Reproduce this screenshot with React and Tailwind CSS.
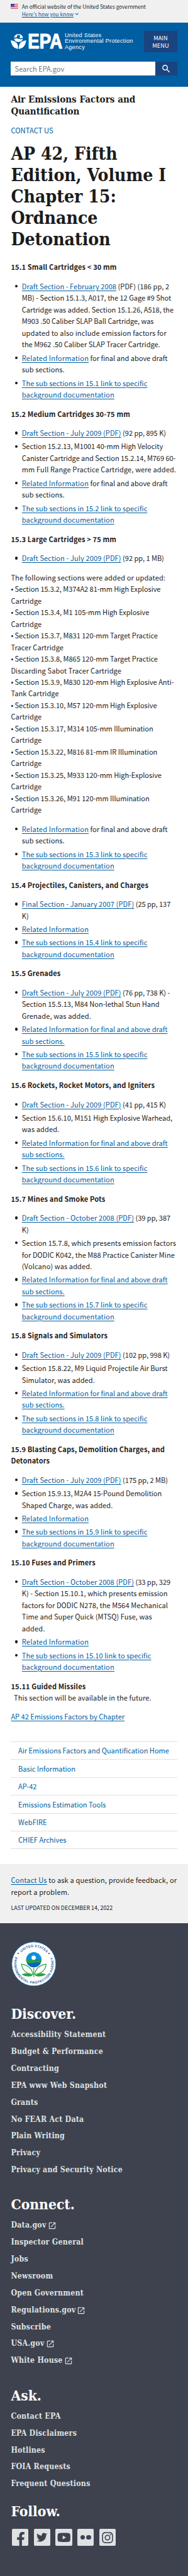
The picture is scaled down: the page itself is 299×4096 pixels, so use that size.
import { MdExpandMore, MdOpenInNew, MdSearch } from 'react-icons/md';
import { FaFacebookF, FaTwitter, FaYoutube, FaInstagram } from 'react-icons/fa';

const D = 'tracking-[0.112px]';
const P = 'tracking-[-0.02px]';

// A run is [text, tracking class, isLink]; a line is a list of runs; an item is a list of lines.
const related = [
  [['Related Information', 'tracking-[0.19px]', true], [' for final and above draft', 'tracking-[0px]']],
  [['sub sections.', 'tracking-[0.1px]']],
];
const relatedLink = [
  [['Related Information', 'tracking-[0.19px]', true], [' for final and above draft', 'tracking-[0px]', true]],
  [['sub sections.', 'tracking-[0.1px]', true]],
];
const relatedOnly = [[['Related Information', 'tracking-[0.19px]', true]]];
const subs = (n) => [
  [[`The sub sections in ${n} link to specific`, 'tracking-[0.049px]', true]],
  [['background documentation', 'tracking-[0.146px]', true]],
];
const july = (rest) => [['Draft Section - July 2009 (PDF)', D, true], [rest, P]];

const s1 = [
  [
    [['Draft Section - February 2008', 'tracking-[0.052px]', true], [' (PDF) (186 pp, 2', 'tracking-[0.08px]']],
    [['MB) - Section 15.1.3, A017, the 12 Gage #9 Shot', 'tracking-[-0.007px]']],
    [['Cartridge was added. Section 15.1.26, A518, the', P]],
    [['M903 .50 Caliber SLAP Ball Cartridge, was', 'tracking-[-0.031px]']],
    [['updated to also include emission factors for', 'tracking-[0.146px]']],
    [['the M962 .50 Caliber SLAP Tracer Cartridge.', 'tracking-[-0.005px]']],
  ],
  related,
  subs('15.1'),
];
const s2 = [
  [july(' (92 pp, 895 K)')],
  [
    [['Section 15.2.13, M1001 40-mm High Velocity', P]],
    [['Canister Cartridge and Section 15.2.14, M769 60-', 'tracking-[-0.042px]']],
    [['mm Full Range Practice Cartridge, were added.', 'tracking-[0.132px]']],
  ],
  related,
  subs('15.2'),
];
const s3a = [[july(' (92 pp, 1 MB)')]];
const s3b = [related, subs('15.3')];
const updated = [
  ['The following sections were added or updated:', 'tracking-[0.131px]'],
  ['• Section 15.3.2, M374A2 81-mm High Explosive', 'tracking-[-0.036px]'],
  ['Cartridge', D],
  ['• Section 15.3.4, M1 105-mm High Explosive', P],
  ['Cartridge', D],
  ['• Section 15.3.7, M831 120-mm Target Practice', P],
  ['Tracer Cartridge', 'tracking-[0.08px]'],
  ['• Section 15.3.8, M865 120-mm Target Practice', P],
  ['Discarding Sabot Tracer Cartridge', D],
  ['• Section 15.3.9, M830 120-mm High Explosive Anti-', 'tracking-[-0.015px]'],
  ['Tank Cartridge', 'tracking-[0.08px]'],
  ['• Section 15.3.10, M57 120-mm High Explosive', P],
  ['Cartridge', D],
  ['• Section 15.3.17, M314 105-mm Illumination', P],
  ['Cartridge', D],
  ['• Section 15.3.22, M816 81-mm IR Illumination', P],
  ['Cartridge', D],
  ['• Section 15.3.25, M933 120-mm High-Explosive', P],
  ['Cartridge', D],
  ['• Section 15.3.26, M91 120-mm Illumination', P],
  ['Cartridge', D],
];
const s4 = [
  [[['Final Section - January 2007 (PDF)', D, true], [' (25 pp, 137', P]], [['K)', P]]],
  relatedOnly,
  subs('15.4'),
];
const s5 = [
  [
    july(' (76 pp, 738 K) -'),
    [['Section 15.5.13, M84 Non-lethal Stun Hand', 'tracking-[0.02px]']],
    [['Grenade, was added.', 'tracking-[0.13px]']],
  ],
  relatedLink,
  subs('15.5'),
];
const s6 = [
  [july(' (41 pp, 415 K)')],
  [[['Section 15.6.10, M151 High Explosive Warhead,', 'tracking-[0.01px]']], [['was added.', D]]],
  relatedLink,
  subs('15.6'),
];
const s7 = [
  [[['Draft Section - October 2008 (PDF)', D, true], [' (39 pp, 387', P]], [['K)', P]]],
  [
    [['Section 15.7.8, which presents emission factors', 'tracking-[0.09px]']],
    [['for DODIC K042, the M88 Practice Canister Mine', 'tracking-[0.062px]']],
    [['(Volcano) was added.', D]],
  ],
  relatedLink,
  subs('15.7'),
];
const s8 = [
  [july(' (102 pp, 998 K)')],
  [[['Section 15.8.22, M9 Liquid Projectile Air Burst', 'tracking-[0.02px]']], [['Simulator, was added.', D]]],
  relatedLink,
  subs('15.8'),
];
const s9 = [
  [july(' (175 pp, 2 MB)')],
  [[['Section 15.9.13, M2A4 15-Pound Demolition', P]], [['Shaped Charge, was added.', D]]],
  relatedOnly,
  subs('15.9'),
];
const s10 = [
  [
    [['Draft Section - October 2008 (PDF)', D, true], [' (33 pp, 329', P]],
    [['K) - Section 15.10.1, which presents emission', 'tracking-[0.06px]']],
    [['factors for DODIC N278, the M564 Mechanical', 'tracking-[0.06px]']],
    [['Time and Super Quick (MTSQ) Fuse, was', 'tracking-[0.06px]']],
    [['added.', D]],
  ],
  relatedOnly,
  subs('15.10'),
];

const LINK = 'text-[#005ea2] underline decoration-1 underline-offset-[1.5px]';

function List({ items }) {
  return (
    <ul className="mb-[12.1px] flex flex-col gap-[2.9px]">
      {items.map((item, i) => (
        <li key={i} className="flex">
          <span className="flex h-[18.47px] w-[17.4px] shrink-0 items-center pl-[6.2px]">
            <span className="size-[4.4px] rounded-full bg-[#1b1b1b]" />
          </span>
          <div>
            {item.map((line, j) => (
              <div key={j} className="whitespace-pre">
                {line.map(([text, track, link], k) =>
                  link ? (
                    <a key={k} className={`${LINK} ${track}`}>{text}</a>
                  ) : (
                    <span key={k} className={track}>{text}</span>
                  ),
                )}
              </div>
            ))}
          </div>
        </li>
      ))}
    </ul>
  );
}

function Head({ children }) {
  return <h3 className="mb-[12.1px] font-bold tracking-[0.15px] whitespace-nowrap">{children}</h3>;
}

function Flag() {
  return (
    <svg viewBox="0 0 16 11" className="mt-[0.8px] h-[8px] w-[11.6px]">
      <rect width="16" height="11" fill="#fff" />
      {[0, 2, 4, 6, 8, 10].map((y) => (
        <rect key={y} y={y} width="16" height="1" fill="#d8314a" />
      ))}
      <rect width="8" height="6.5" fill="#1e33b1" />
      {[1, 3, 5].map((y) => [1, 3, 5, 7].map((x) => <circle key={`${x}-${y}`} cx={x} cy={y} r=".45" fill="#fff" />))}
    </svg>
  );
}

function Logo() {
  return (
    <svg viewBox="0 0 345 110" className="h-[26.6px] w-[83.5px] overflow-visible">
      <path d="M21 33A31 31 0 0 1 81 33Q66 39 51 33T21 33Z" fill="#fff" />
      <circle cx="51" cy="25" r="10.5" fill="#005ea2" />
      <path d="M22 40Q36 34 51 40T80 40Q74 60 51 61Q28 60 22 40Z" fill="#fff" />
      <path d="M0 50Q36 56 44 76Q50 92 49 106Q8 104 0 50Z" fill="#fff" />
      <path d="M102 50Q66 56 58 76Q52 92 53 106Q94 104 102 50Z" fill="#fff" />
      <text
        x="113" y="102" fontFamily="Liberation Sans, Arial, sans-serif" fontWeight="700" fontSize="139"
        textLength="227" lengthAdjust="spacingAndGlyphs" fill="#fff" stroke="#fff" strokeWidth="5"
      >
        EPA
      </text>
    </svg>
  );
}

function Seal() {
  return (
    <svg viewBox="15 15 296 296" className="h-[71.6px] w-[71.6px]">
      <defs>
        <path id="ring-top" d="M52 163A111 111 0 0 1 274 163" />
        <path id="ring-low" d="M42.5 114A130 130 0 1 0 283.5 114" />
      </defs>
      <circle cx="163" cy="163" r="145" fill="#fff" stroke="#1a6fae" strokeWidth="4" />
      <g fontFamily="Liberation Sans, Arial, sans-serif" fontWeight="700" fontSize="22" fill="#1f5f99">
        <text><textPath href="#ring-top" startOffset="83" textLength="186">UNITED STATES</textPath></text>
        <text><textPath href="#ring-low" startOffset="3" textLength="500">ENVIRONMENTAL PROTECTION AGENCY</textPath></text>
      </g>
      <circle cx="60" cy="94" r="5" fill="#1f5f99" />
      <circle cx="263" cy="94" r="5" fill="#1f5f99" />
      <circle cx="163" cy="136" r="50" fill="#0b63b8" />
      <path d="M113 136A50 50 0 0 1 213 136Z" fill="#0a93dd" />
      <path d="M113 134Q138 128 163 136T213 134Q213 146 209 156Q186 150 163 155T117 156Q113 146 113 134Z" fill="#2a9d4e" />
      <circle cx="162" cy="122" r="14" fill="#fff" />
      <g fill="none" stroke="#2fa043" strokeWidth="5">
        <path d="M82 164Q88 224 158 232Q146 172 82 164Z" />
        <path d="M244 164Q238 224 168 232Q180 172 244 164Z" />
        <path d="M163 188V250" />
      </g>
      <path d="M82 232Q122 212 158 238Q122 256 82 232ZM244 232Q204 212 168 238Q204 256 244 232Z" fill="#2fa043" />
    </svg>
  );
}

const side = ['Air Emissions Factors and Quantification Home', 'Basic Information', 'AP-42', 'Emissions Estimation Tools', 'WebFIRE', 'CHIEF Archives'];
const discover = ['Accessibility Statement', 'Budget & Performance', 'Contracting', 'EPA www Web Snapshot', 'Grants', 'No FEAR Act Data', 'Plain Writing', 'Privacy', 'Privacy and Security Notice'];
const connect = ['Data.gov', 'Inspector General', 'Jobs', 'Newsroom', 'Open Government', 'Regulations.gov', 'Subscribe', 'USA.gov', 'White House'];
const external = ['Data.gov', 'Regulations.gov', 'USA.gov', 'White House'];
const ask = ['Contact EPA', 'EPA Disclaimers', 'Hotlines', 'FOIA Requests', 'Frequent Questions'];

function FootHead({ children }) {
  return <h2 className="mb-[6.2px] h-[27px] text-[22.7px] leading-[27px] font-bold text-white">{children}</h2>;
}

function FootLinks({ items }) {
  return (
    <ul className="text-[12.3px] leading-[26.87px] font-bold tracking-[0.22px] text-[#dfe1e2]">
      {items.map((t) => (
        <li key={t} className="flex h-[26.87px] items-center whitespace-nowrap">
          {t}
          {external.includes(t) && <MdOpenInNew className="mt-[1px] ml-[2px] size-[14px]" />}
        </li>
      ))}
    </ul>
  );
}

function Tile({ children }) {
  return <span className="flex size-[26.1px] items-center justify-center overflow-hidden rounded-[2px] bg-[#dfe1e2] text-[#3e424e]">{children}</span>;
}

const SERIF = "font-['DejaVu_Serif_Condensed','DejaVu_Serif',serif]";

export default function App() {
  return (
    <div className="flex h-[4096px] w-[299px] flex-col overflow-hidden bg-white font-['Noto_Sans_CJK_JP','Noto_Sans',sans-serif] text-[11.02px] leading-[18.472px] text-[#1b1b1b]">
      <div className="flex h-[35.6px] gap-[5.8px] bg-[#f0f0f0] pt-[5.2px] pl-[17.4px] text-[8.32px] leading-[11.6px]">
        <Flag />
        <div className="whitespace-nowrap">
          <p>An official website of the United States government</p>
          <p className="flex items-center text-[#005ea2]">
            <span className="underline decoration-1 underline-offset-[1px]">Here’s how you know</span>
            <MdExpandMore className="ml-[0.5px] size-[10.6px] stroke-current" />
          </p>
        </div>
      </div>

      <header className="h-[102.1px] bg-[#005ea2] px-[17.4px] pt-[13px]">
        <div className="flex h-[34px] justify-between">
          <div className="flex">
            <div className="pt-[3.8px]"><Logo /></div>
            <p className="ml-[2px] pt-[3.6px] font-['Liberation_Sans',Arial,sans-serif] text-[9.1px] leading-[9.3px] tracking-[0.3px] whitespace-nowrap text-white">
              United States<br />Environmental Protection<br />Agency
            </p>
          </div>
          <button className="w-[52.3px] shrink-0 bg-[#1a4480] text-center text-[9.3px] leading-[12px] text-white">
            MAIN<br />MENU
          </button>
        </div>
        <div className="mt-[15.1px] flex h-[22.8px]">
          <div className="flex w-[229.4px] items-center bg-white pl-[6.2px] text-[#757575]">Search EPA.gov</div>
          <div className="flex grow items-center justify-center bg-[#1a4480] text-white"><MdSearch className="size-[16.6px]" /></div>
        </div>
      </header>

      <main className="flex h-[2826px] shrink-0 flex-col px-[17.4px] pt-[11.1px]">
        <h2 className={`${SERIF} text-[15.09px] leading-[19.3px] font-bold whitespace-nowrap`}>
          Air Emissions Factors and<br />Quantification
        </h2>
        <p className="mt-[10.2px] text-[11.3px] text-[#005ea2]">CONTACT US</p>
        <h1 className={`${SERIF} mt-[11.6px] mb-[17.8px] text-[28.2px] leading-[34px] font-bold whitespace-nowrap`}>
          AP 42, Fifth<br />Edition, Volume I<br />Chapter 15:<br />Ordnance<br />Detonation
        </h1>

        <Head>15.1 Small Cartridges &lt; 30 mm</Head>
        <List items={s1} />
        <Head>15.2 Medium Cartridges 30-75 mm</Head>
        <List items={s2} />
        <Head>15.3 Large Cartridges &gt; 75 mm</Head>
        <List items={s3a} />
        <div className="mb-[12.1px]">
          {updated.map(([t, track], i) => (
            <div key={i} className={`whitespace-nowrap ${track}`}>{t}</div>
          ))}
        </div>
        <List items={s3b} />
        <Head>15.4 Projectiles, Canisters, and Charges</Head>
        <List items={s4} />
        <Head>15.5 Grenades</Head>
        <List items={s5} />
        <Head>15.6 Rockets, Rocket Motors, and Igniters</Head>
        <List items={s6} />
        <Head>15.7 Mines and Smoke Pots</Head>
        <List items={s7} />
        <Head>15.8 Signals and Simulators</Head>
        <List items={s8} />
        <Head>15.9 Blasting Caps, Demolition Charges, and<br />Detonators</Head>
        <List items={s9} />
        <Head>15.10 Fuses and Primers</Head>
        <List items={s10} />
        <p className="mb-[11.6px]">
          <b className="tracking-[0.15px]">15.11 Guided Missiles</b><br />
          <span className="pl-[4.6px] tracking-[0.09px]">This section will be available in the future.</span>
        </p>
        <p><a className={LINK}>AP 42 Emissions Factors by Chapter</a></p>

        <ul className="mt-auto mb-[23.4px] border-b border-[#dfe1e2] text-[#005ea2]">
          {side.map((t) => (
            <li key={t} className="flex h-[28.4px] items-center border-t border-[#dfe1e2] pl-[11.7px] whitespace-nowrap">{t}</li>
          ))}
        </ul>
      </main>

      <section className="h-[94.3px] shrink-0 bg-[#f0f0f0] px-[17.4px] pt-[16.5px]">
        <p className="whitespace-nowrap">
          <a className={`${LINK} tracking-[0.16px]`}>Contact Us</a>
          <span className="tracking-[0.157px]"> to ask a question, provide feedback, or<br />report a problem.</span>
        </p>
        <p className="mt-[8.3px] text-[8.91px]">LAST UPDATED ON DECEMBER 14, 2022</p>
      </section>

      <footer className={`${SERIF} grow bg-[#3e424e] px-[17.4px] pt-[28.7px]`}>
        <div className="mb-[30.8px] pl-[0.7px]"><Seal /></div>
        <FootHead>Discover.</FootHead>
        <FootLinks items={discover} />
        <div className="h-[28.2px]" />
        <FootHead>Connect.</FootHead>
        <FootLinks items={connect} />
        <div className="h-[28.6px]" />
        <FootHead>Ask.</FootHead>
        <FootLinks items={ask} />
        <div className="h-[17.2px]" />
        <h2 className="h-[27px] text-[22.7px] leading-[27px] font-bold text-white">Follow.</h2>
        <div className="mt-[14.1px] flex gap-[8.75px] pl-[1.4px]">
          <Tile><FaFacebookF className="mt-[5px] ml-[1.5px] size-[22px]" /></Tile>
          <Tile><FaTwitter className="size-[17px]" /></Tile>
          <Tile><FaYoutube className="size-[21.5px]" /></Tile>
          <Tile>
            <span className="flex gap-[1.8px]">
              <span className="size-[7.4px] rounded-full bg-[#3e424e]" />
              <span className="size-[7.4px] rounded-full bg-[#3e424e]" />
            </span>
          </Tile>
          <Tile><FaInstagram className="size-[20px]" /></Tile>
        </div>
      </footer>
    </div>
  );
}
